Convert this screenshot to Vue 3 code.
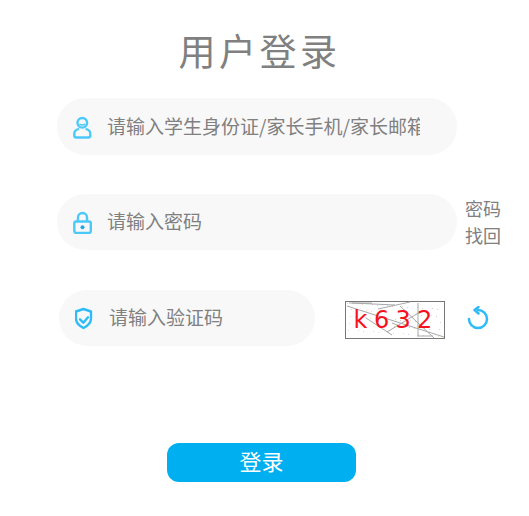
<script setup>
const noise = [
  [349,303,372,303],[352,303,395,305],[347,306,444,337],[378,309,410,302],[387,332,420,312],[400,306,434,338],[418,303,418,336],[417,336,433,336],[392,323,402,327],[366,318,392,335]
]
const dotColours = ['#c9e4c9', '#e4c9dc', '#c9d6ee', '#e6e0bd']
const dots = Array.from({ length: 60 }, (_, i) => ({
  x: 347 + ((i * 37) % 96),
  y: 303 + ((i * 23) % 34),
  c: dotColours[i % 4]
}))
</script>

<template>
  <div class="page">
    <h1 class="title">用户登录</h1>
    <div class="row first">
      <div class="field">
        <svg class="icon" viewBox="0 0 20 24" fill="none" stroke="#4cc9fb" stroke-width="2.400">
          <circle cx="9.300" cy="7.800" r="4.800" />
          <path d="M6.400 9c1.500 1.300 4.300 1.300 5.800 0" stroke-width="1.600" />
          <path d="M6 13.800C3.200 14.500 1.300 16.300 1.300 18.500v2a2 2 0 0 0 2 2h12a2 2 0 0 0 2-2v-2c0-2.200-1.900-4-4.700-4.700" stroke-linejoin="round" />
        </svg>
        <input class="input" placeholder="请输入学生身份证/家长手机/家长邮箱" />
      </div>
    </div>
    <div class="row second">
      <div class="field">
        <svg class="icon" viewBox="0 0 20 24" fill="none" stroke="#4cc9fb" stroke-width="2.400">
          <path d="M5 11.500V7.500a4.500 4.500 0 0 1 9 0v4" />
          <rect x="1.300" y="11.500" width="16.500" height="11.500" rx="2" />
          <circle cx="9.500" cy="17.300" r="2" fill="#1fa8e8" stroke="none" />
        </svg>
        <input class="input" placeholder="请输入密码" />
      </div>
      <a class="forgot">密码<br />找回</a>
    </div>
    <div class="row third">
      <div class="field short">
        <svg class="icon" viewBox="0 0 20 24" fill="none" stroke="#2dbcf8" stroke-width="2.400" stroke-linejoin="round">
          <path d="M8.500 3 16 5.500v7c0 4.500-3.500 7.500-7.500 9.500C4.500 20 1 17 1 12.500v-7z" />
          <path d="M5 13.300l3.300 3.400 4.700-5.400" stroke-linecap="round" />
        </svg>
        <input class="input" placeholder="请输入验证码" />
      </div>
      <svg class="captcha" viewBox="345 301 100 38">
        <rect x="345.500" y="301.500" width="99" height="37" fill="#fff" stroke="#777" />
        <rect v-for="(d, i) in dots" :key="'d' + i" :x="d.x" :y="d.y" width="1" height="1" :fill="d.c" />
        <line v-for="(n, i) in noise" :key="i" :x1="n[0]" :y1="n[1]" :x2="n[2]" :y2="n[3]" stroke="#a8a8a8" stroke-width="1" />
        <text x="353.500" y="328" class="code">k</text>
        <text x="374" y="328" class="code">6</text>
        <text x="395.500" y="328" class="code">3</text>
        <text x="417" y="328" class="code">2</text>
      </svg>
      <svg class="refresh" viewBox="0 0 24 24" fill="none" stroke="#2dbcf8" stroke-width="2.500" stroke-linecap="round" stroke-linejoin="round">
        <path d="M12 4A9 9 0 1 1 3 13" />
        <path d="M12.500 1 8.500 4l4 3.500" />
      </svg>
    </div>
    <button class="submit">登录</button>
  </div>
</template>

<style scoped>
.page {
  width: 529px;
  height: 516px;
  box-sizing: border-box;
  padding-top: 27px;
  background: #fff;
  font-family: "Noto Sans CJK SC", "Liberation Sans", sans-serif;
  overflow: hidden;
}
.title {
  margin: 0;
  padding-right: 10px;
  text-align: center;
  font-size: 37px;
  line-height: 46px;
  font-weight: 400;
  letter-spacing: 3.500px;
  color: #808080;
}
.row {
  display: flex;
  align-items: center;
}
.first {
  margin: 25px 0 0 57px;
}
.second {
  margin: 39px 0 0 57px;
}
.third {
  margin: 40px 0 0 59px;
}
.field {
  display: flex;
  align-items: center;
  width: 400px;
  height: 56px;
  box-sizing: border-box;
  padding-left: 16px;
  border-radius: 28px;
  background: #f8f8f8;
}
.first .field {
  height: 57px;
}
.short {
  width: 256px;
}
.icon {
  flex: none;
  width: 20px;
  height: 24px;
}
.input {
  width: 313px;
  margin-left: 14px;
  padding: 0 0 2px;
  border: 0;
  outline: 0;
  background: transparent;
  font-family: inherit;
  font-size: 19px;
  line-height: 28px;
  color: #757575;
}
.short .input {
  width: 180px;
}
.input::placeholder {
  color: #808080;
  opacity: 1;
}
.forgot {
  margin-left: 8px;
  font-size: 18px;
  line-height: 27px;
  color: #808080;
}
.captcha {
  flex: none;
  width: 100px;
  height: 38px;
  margin: 4px 0 0 30px;
}
.code {
  font-family: "DejaVu Sans", sans-serif;
  font-size: 24px;
  fill: #f5121c;
}
.refresh {
  flex: none;
  width: 24px;
  height: 24px;
  margin-left: 21px;
}
.submit {
  display: block;
  width: 189px;
  height: 39px;
  margin: 97px 0 0 167px;
  padding: 0 0 5px;
  border: 0;
  border-radius: 12px;
  background: #00aff0;
  font-family: inherit;
  font-size: 22px;
  color: #fff;
}
</style>
